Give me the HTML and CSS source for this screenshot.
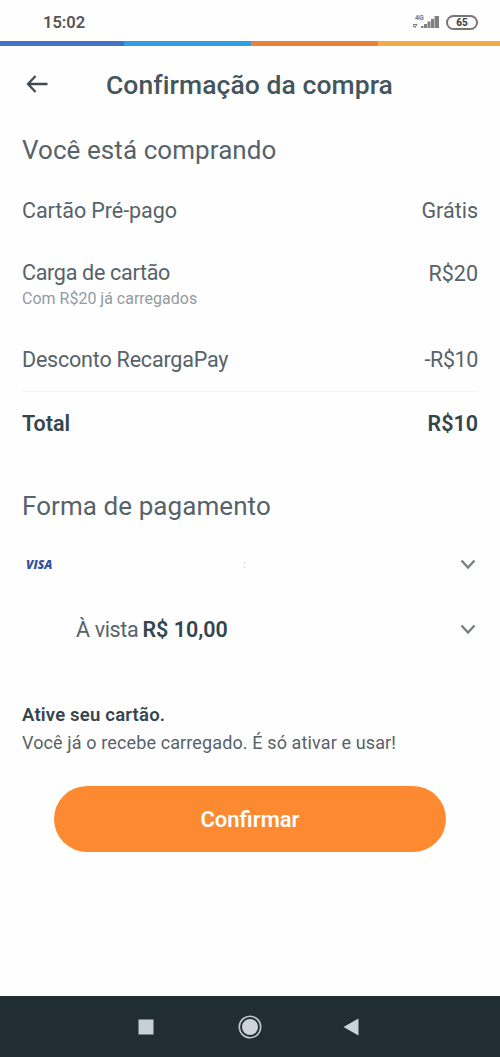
FILE: index.html
```html
<!DOCTYPE html>
<html lang="pt-BR">
<head>
<meta charset="utf-8">
<title>Confirmação da compra</title>
<link rel="stylesheet" href="styles.css">
</head>
<body>
<div class="screen">
  <div class="status">
    <span class="clock">15:02</span>
    <div class="indicators">
      <svg class="signal" width="26" height="16" viewBox="0 0 26 16">
        <text x="2" y="6" class="network">4G</text>
        <path d="M0 10.500h4l-1.500 2H0zM1 13h2" fill="none" stroke="#777" stroke-width="1"/>
        <path d="M8 14v-2h2.500v2zM11 14v-4h3v4zM14.500 14V7.500h3V14zM18 14V5h3v9zM21.500 14V2H26v12z" fill="#808080"/>
      </svg>
      <span class="battery">65</span>
    </div>
  </div>
  <div class="stripe"><i class="navy"></i><i class="sky"></i><i class="orange"></i><i class="amber"></i></div>
  <header class="header">
    <svg class="back" width="22" height="20" viewBox="0 0 22 20"><path d="M21.500 10H2.500M9.500 2 2 10l7.500 8" fill="none" stroke="#3e4c52" stroke-width="2.300"/></svg>
    <h1 class="title">Confirmação da compra</h1>
  </header>
  <main class="content">
    <h2 class="section buying">Você está comprando</h2>
    <div class="row card"><span class="l-card">Cartão Pré-pago</span><span class="v-free">Grátis</span></div>
    <div class="row load">
      <div class="stack"><span class="l-load">Carga de cartão</span><small class="note">Com R$20 já carregados</small></div>
      <span class="v-load">R$20</span>
    </div>
    <div class="row discount"><span class="l-disc">Desconto RecargaPay</span><span class="v-disc">-R$10</span></div>
    <div class="row total"><span class="l-total">Total</span><span class="v-total">R$10</span></div>
    <h2 class="section payment">Forma de pagamento</h2>
    <div class="row method">
      <span class="visa">VISA</span>
      <span class="mark">:</span>
      <svg class="chevron" width="16" height="11" viewBox="0 0 16 11"><path d="M1.500 1.500 8 8.500l6.500-7" fill="none" stroke="#777d80" stroke-width="2.300"/></svg>
    </div>
    <div class="row installment">
      <span class="plan"><span class="cash">À vista</span><b class="amount">R$ 10,00</b></span>
      <svg class="chevron" width="16" height="11" viewBox="0 0 16 11"><path d="M1.500 1.500 8 8.500l6.500-7" fill="none" stroke="#777d80" stroke-width="2.300"/></svg>
    </div>
    <div class="promo"><b class="promo-title">Ative seu cartão.</b><span class="promo-text">Você já o recebe carregado. É só ativar e usar!</span></div>
    <button class="confirm"><span class="confirm-label">Confirmar</span></button>
  </main>
  <nav class="nav">
    <svg width="16" height="16" viewBox="0 0 16 16"><path d="M.5.500h15v15H.5z" fill="#c8d0d6"/></svg>
    <svg width="24" height="24" viewBox="0 0 24 24"><circle cx="12" cy="12" r="10.700" fill="none" stroke="#c0c8cc" stroke-width="1.600"/><circle cx="12" cy="12" r="8" fill="#cdd3d8"/></svg>
    <svg width="16" height="18" viewBox="0 0 16 18"><path d="M15.500.500v17L.5 9z" fill="#c8d5da"/></svg>
  </nav>
</div>
</body>
</html>
```
FILE: styles.css
```css
* { box-sizing: border-box; }
body { margin: 0; background: #fefefe; font-family: Roboto, "Liberation Sans", sans-serif; color: #56636a; }
.screen { display: flex; flex-direction: column; height: 1057px; }
.status { display: flex; justify-content: space-between; align-items: center; height: 41px; padding: 3px 22px 0 43px; }
.clock { font-size: 16.500px; font-weight: 600; color: #555; }
.indicators { display: flex; align-items: center; gap: 7px; }
.network { font-size: 7px; font-weight: 700; fill: #777; }
.battery { width: 32px; height: 15px; border: 2px solid #777; border-radius: 8px; font-size: 10px; font-weight: 800; line-height: 11px; text-align: center; color: #444; }
.stripe { display: grid; grid-template-columns: 124px 127px 127px 1fr; height: 5px; }
.navy { background: #4472c4; }
.sky { background: #2f9ee6; }
.orange { background: #e8823c; }
.amber { background: #f5a947; }
.header { display: flex; align-items: center; height: 78px; padding: 0 26px; }
.back { margin-top: -3px; }
.title { margin: -2px 0 0 58px; font-size: 26.500px; font-weight: 500; color: #45555c; white-space: nowrap; letter-spacing: .07px; }
.content { display: flex; flex-direction: column; flex: 1; padding: 0 22px; }
.section { display: flex; align-items: center; height: 52px; margin: 0; font-size: 26px; font-weight: 400; white-space: nowrap; letter-spacing: .07px; }
.row { display: flex; justify-content: space-between; align-items: center; font-size: 21.500px; white-space: nowrap; }
.card { height: 70px; padding-bottom: 2px; }
.l-card { letter-spacing: -.07px; }
.load { height: 84px; align-items: flex-start; padding-top: 13px; line-height: 28px; }
.l-load { letter-spacing: -.3px; }
.v-load { padding-top: 1px; }
.stack { display: flex; flex-direction: column; }
.note { font-size: 16px; line-height: 24px; color: #929b9f; }
.discount { height: 62px; padding-bottom: 2px; border-bottom: 1px solid #f3f4f4; }
.l-disc { letter-spacing: -.2px; }
.v-disc { letter-spacing: -.4px; }
.total { height: 64px; padding-bottom: 2px; font-weight: 600; color: #34454d; }
.payment { margin-top: 24px; }
.method { height: 64px; padding: 0 2px 0 4px; }
.visa { font: italic 800 12px "Open Sans", sans-serif; color: #34519b; }
.mark { margin-right: 23px; font-size: 11px; color: #bbb; }
.installment { height: 67px; padding: 0 2px 0 54px; }
.plan { display: flex; gap: 4px; }
.cash { letter-spacing: -.35px; }
.amount { font-weight: 600; color: #34454d; }
.promo { display: flex; flex-direction: column; margin-top: 38px; line-height: 28px; font-size: 18px; white-space: nowrap; }
.promo-title { font-weight: 600; color: #34454d; font-size: 18.500px; letter-spacing: .2px; }
.promo-text { letter-spacing: .12px; }
.confirm { height: 66px; margin: 29px 32px 0; border: 0; border-radius: 33px; background: #fd8930; color: #fff; font: 600 22px Roboto, sans-serif; }
.nav { display: grid; grid-template-columns: 16px 24px 16px; justify-content: center; align-items: center; gap: 0 84px; height: 61px; padding-right: 0; background: #202d33; }
.nav svg:last-child { margin-left: -3px; }
```
